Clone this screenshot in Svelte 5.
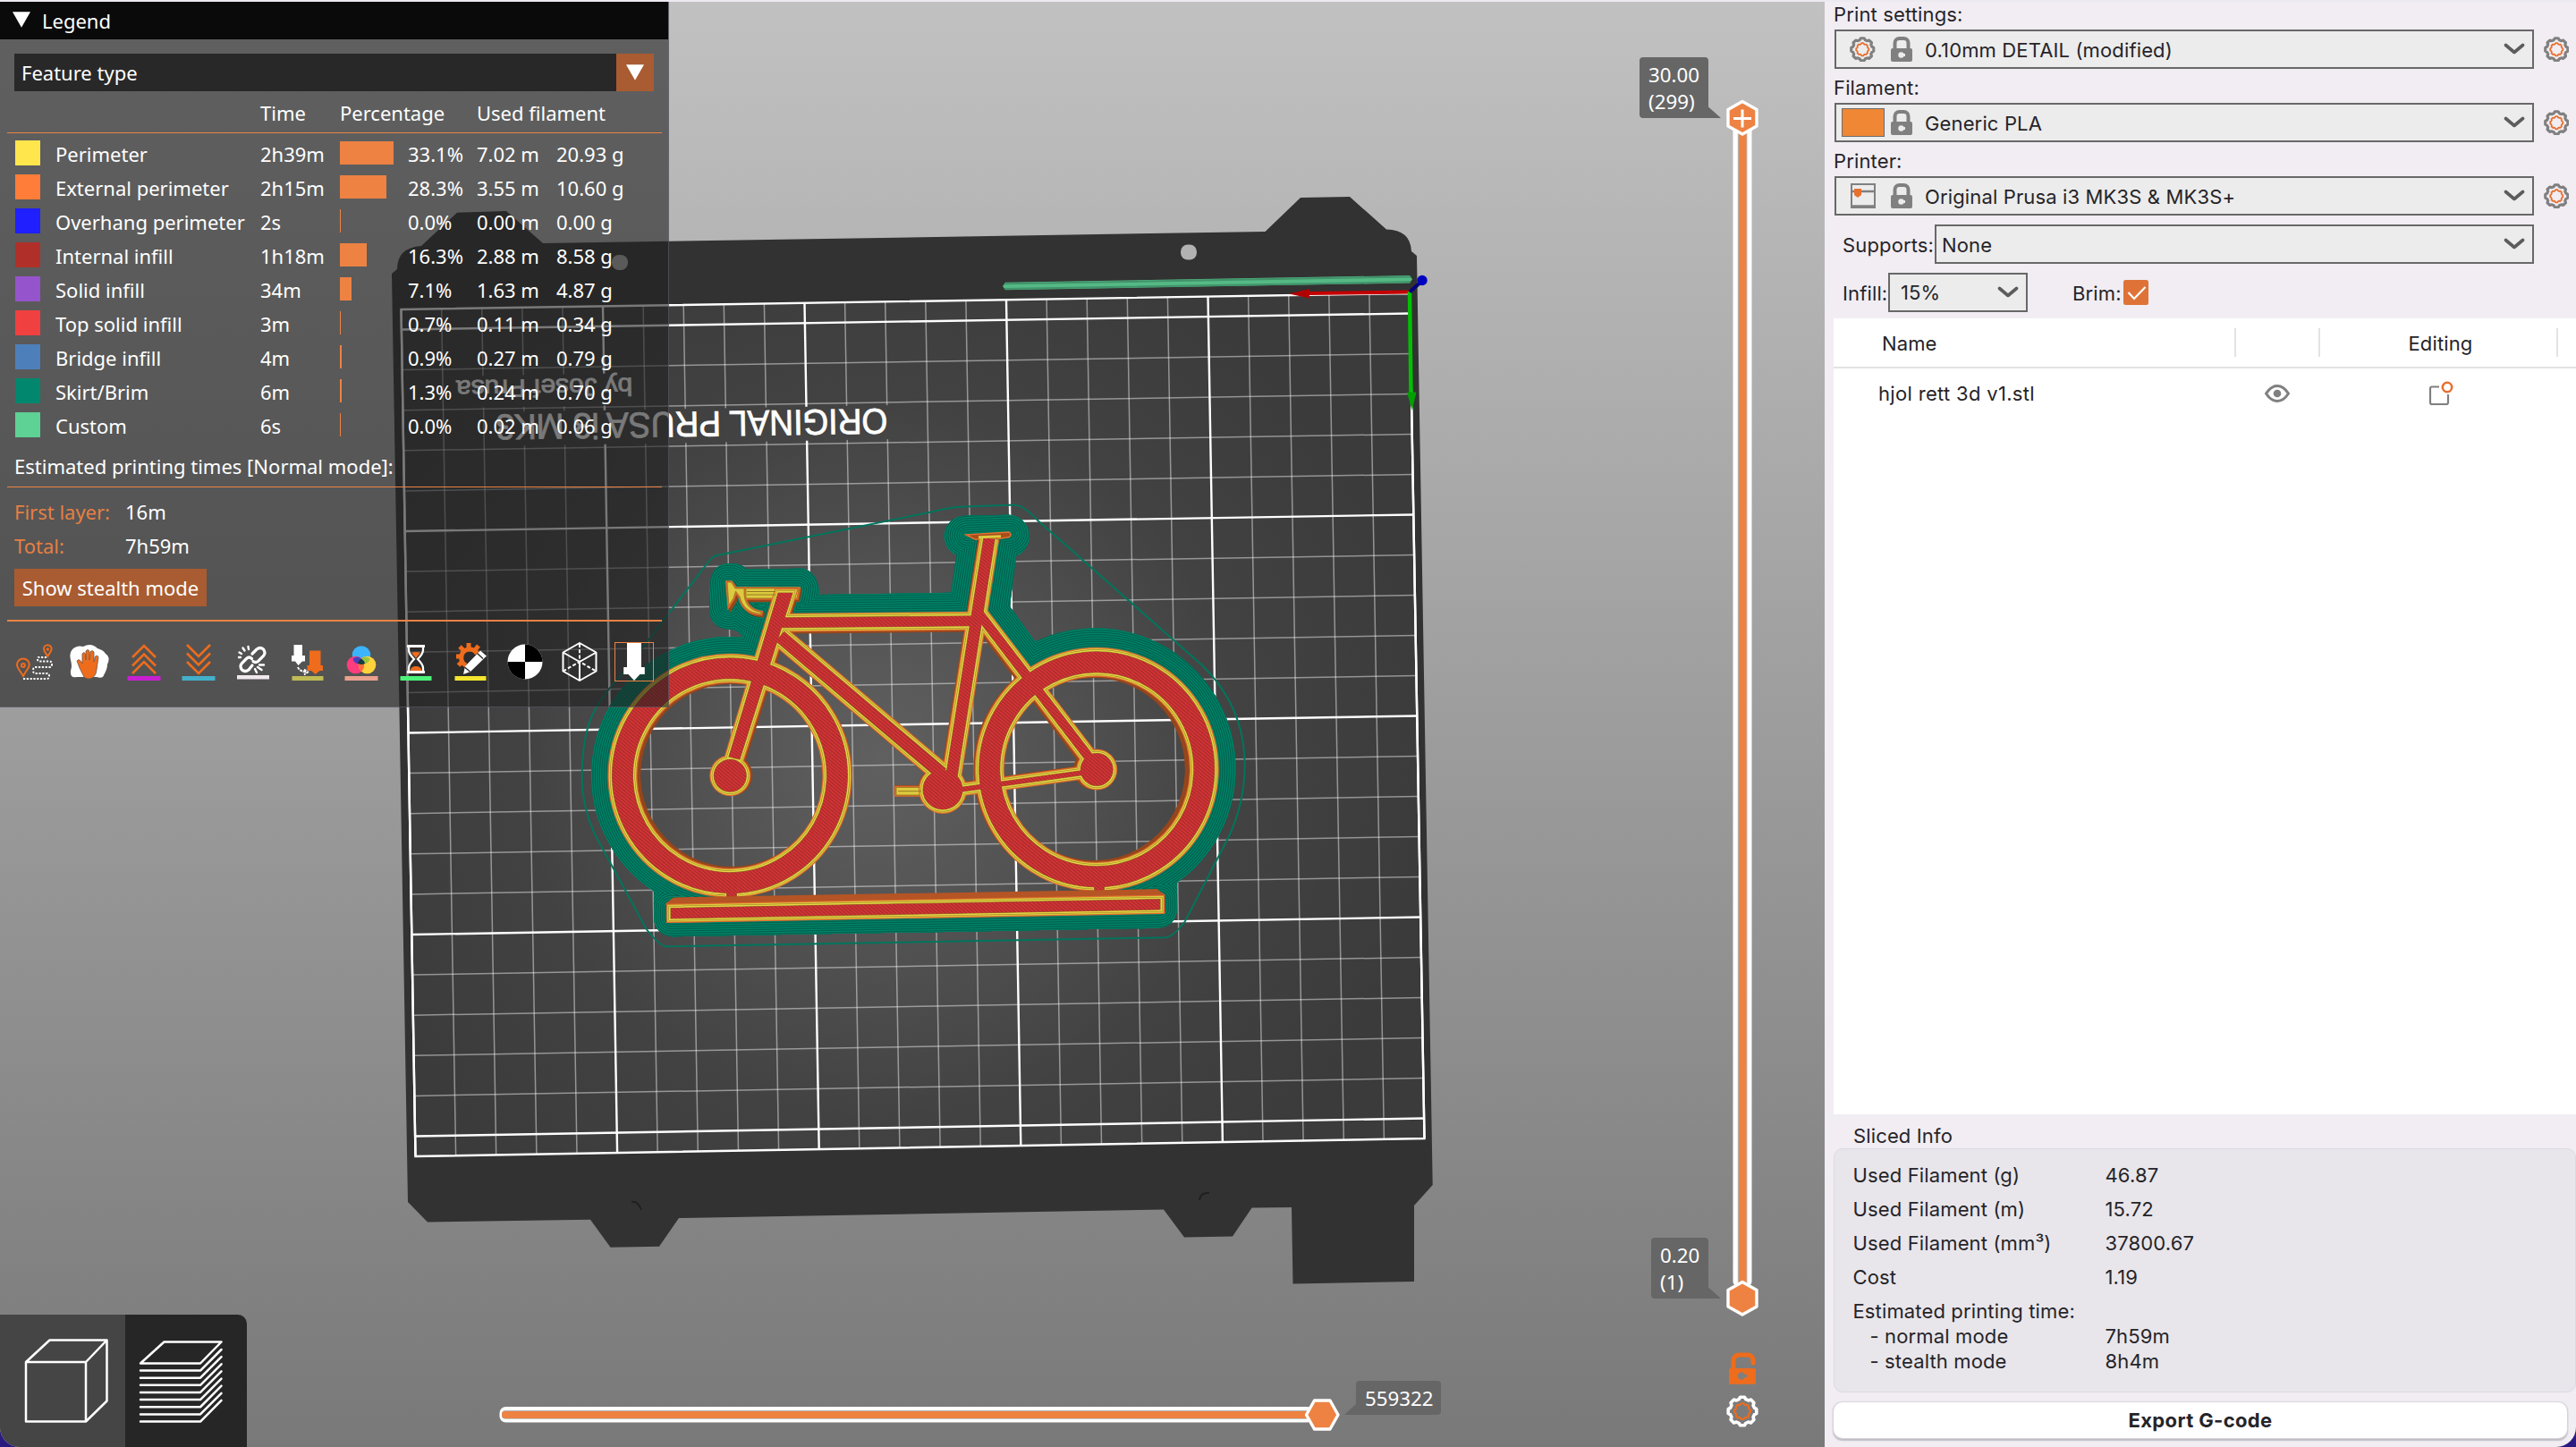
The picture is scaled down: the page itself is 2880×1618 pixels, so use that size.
<script>
  const features = [
    { name: 'Perimeter', color: '#ffe64d', time: '2h39m', bar: 60, pct: '33.1%', m: '7.02 m', g: '20.93 g' },
    { name: 'External perimeter', color: '#ff7d38', time: '2h15m', bar: 51.5, pct: '28.3%', m: '3.55 m', g: '10.60 g' },
    { name: 'Overhang perimeter', color: '#1f1fff', time: '2s', bar: 1, pct: '0.0%', m: '0.00 m', g: '0.00 g' },
    { name: 'Internal infill', color: '#b03029', time: '1h18m', bar: 30, pct: '16.3%', m: '2.88 m', g: '8.58 g' },
    { name: 'Solid infill', color: '#9654cc', time: '34m', bar: 13, pct: '7.1%', m: '1.63 m', g: '4.87 g' },
    { name: 'Top solid infill', color: '#f04040', time: '3m', bar: 1.4, pct: '0.7%', m: '0.11 m', g: '0.34 g' },
    { name: 'Bridge infill', color: '#4d80ba', time: '4m', bar: 1.8, pct: '0.9%', m: '0.27 m', g: '0.79 g' },
    { name: 'Skirt/Brim', color: '#00876e', time: '6m', bar: 2.4, pct: '1.3%', m: '0.24 m', g: '0.70 g' },
    { name: 'Custom', color: '#5ed194', time: '6s', bar: 1, pct: '0.0%', m: '0.02 m', g: '0.06 g' }
  ];

  const presets = [
    { label: 'Print settings:', icon: 'gear', value: '0.10mm DETAIL (modified)' },
    { label: 'Filament:', icon: 'swatch', value: 'Generic PLA' },
    { label: 'Printer:', icon: 'printer', value: 'Original Prusa i3 MK3S & MK3S+' }
  ];

  const info = [
    ['Used Filament (g)', '46.87'],
    ['Used Filament (m)', '15.72'],
    ['Used Filament (mm³)', '37800.67'],
    ['Cost', '1.19']
  ];

  // Corners of the printable area, and a bilinear lookup between them
  const TL = [448.5, 346], TR = [1576, 328], BL = [464.5, 1293], BR = [1592.5, 1273];
  function at(u, v) {
    return [0, 1].map((i) =>
      ((1 - v) * ((1 - u) * TL[i] + u * TR[i]) + v * ((1 - u) * BL[i] + u * BR[i])).toFixed(1)
    );
  }
  const columns = Array.from({ length: 26 }, (_, i) => ({ a: at(i / 25, 0), b: at(i / 25, 1), major: i % 5 === 0 }));
  const rows = Array.from({ length: 21 }, (_, i) => {
    const v = (5 + i * 10) / 210;
    return { a: at(0, v), b: at(1, v), major: i % 5 === 0 };
  });

  // Solid body of the model: stroked centre lines and filled outlines
  const body = [
    { d: 'M816 747.2a120 120 0 1 1-.1 0z', w: 23 },
    { d: 'M1226.3 740.3a120 120 0 1 1-.1 0z', w: 23 },
    { d: 'M816.3 867.3h.01', w: 36 },
    { d: 'M1226.2 860.5h.01', w: 36 },
    { d: 'M1054 883h.01', w: 44 },
    { d: 'M870 663L886 663L827 849L815 846Z', w: 0, fill: true },
    { d: 'M874 696.3L1092 694.2', w: 11 },
    { d: 'M872 711.5L1053 865', w: 14 },
    { d: 'M1106 602L1062 880', w: 12.5 },
    { d: 'M1093 684L1226 858', w: 10 },
    { d: 'M1062 884.5L1222 862.5', w: 5 },
    { d: 'M818 985V1012', w: 11 },
    { d: 'M1229 978V1006', w: 11 }
  ];
  // Thin features made of perimeters alone
  const thin = [
    'M834 658H893L891 669H834Z',
    'M813 651h4.500l4.500 7h10v7c1 11 7 18 19 19.500l-.5 2c-13-1-21-8-23.500-19.500l-4.500-6-2.500 8-5 8z',
    'M1002 880.500H1032V889H1002Z'
  ];
  const layers = [
    { c: '#db6a2b', x: 10 },
    { c: '#dccb40', x: 7.6 },
    { c: '#94781f', x: 5 },
    { c: '#e6d646', x: 4 },
    { c: '#8f6b22', x: 1.1 },
    { c: 'url(#infill)', x: 0 }
  ];
  const brimLayers = Array.from({ length: 22 }, (_, i) => ({ c: i % 2 ? '#00624e' : '#00856a', x: 62 - i * 2.5 }));
  const brimPath =
    'M731 996.600A155 155 0 0 1 661 867A155 155 0 0 1 831.500 712.800C826 705 822 704 815 703.700Q794 702 793.300 682V655Q795 631 815 630Q828 629 835 636.700L897 635.700Q915 639 915.700 665L1063.300 662.700L1069.300 620.700A23 23 0 0 1 1078 576.700L1128 575.700A23.900 23.900 0 0 1 1136 621.700L1129 678.300L1157.300 717.500A157 157 0 0 1 1381.300 866A155 155 0 0 1 1316 986.700V1016.700Q1314 1036 1295 1037.700L751.700 1047.300Q733 1045 731 1026.700Z' +
    'M818 1015V987A120 120 0 0 1 696 867A120 120 0 0 1 850 752L866 696L1088 694L1150 765A120 120 0 0 1 1346.300 860A120 120 0 0 1 1229 980V1008Z';
  const skirtPath =
    'M801.700 621L1040 572.700Q1058 568 1073 566.700L1128 564.700Q1138 564 1144 568Q1151 572 1160 581.700L1343 743Q1392 790 1391.700 857Q1391 900 1373 937L1325 1030Q1312 1047 1304 1048.300L744 1058.300Q736 1056 722.700 1039L665 933Q650 900 650.700 867Q651 825 662 800Q673 777 693 757L793 627Q797 622 801.700 621Z';
  const platePath =
    'M438 306L444 301Q444 277 471 275L511 237.700L566 236L607 272L1414.500 259L1454 221L1509 220L1550 256.500Q1577 257 1578 281L1584 286L1601.700 1325L1581 1348V1433L1445.500 1435.500L1444 1350L1399.600 1350.500L1378 1382.500L1324 1383.500L1301 1352.500L759 1362L737 1393.700L682.500 1394.700L660 1363.700L478 1366.500L456 1344Z';

  // Cog outline with n rounded teeth
  function cog(c, r1, r2, n) {
    let d = '';
    for (let i = 0; i < n; i++) {
      const a = (i * 2 * Math.PI) / n - Math.PI / 2, s = Math.PI / n;
      [[r2, -0.38], [r2, 0.38], [r1, 0.72], [r1, 1.28]].forEach(([r, k], j) => {
        d += (i || j ? 'L' : 'M') + (c + r * Math.cos(a + s * k)).toFixed(1) + ' ' + (c + r * Math.sin(a + s * k)).toFixed(1);
      });
    }
    return d + 'Z';
  }
  const cogOuter = cog(18, 13.800, 16, 8);
  const cogInner = cog(18, 7.800, 9, 8);
</script>

{#snippet gear(tone)}
  <svg class="gear" viewBox="0 0 36 36">
    <path d={cogOuter} fill="none" stroke={tone} stroke-width="4" stroke-linejoin="round" />
    <path d={cogInner} fill="none" stroke="#e8702f" stroke-width="2.300" stroke-linejoin="round" />
  </svg>
{/snippet}

{#snippet lock()}
  <svg class="lock" viewBox="0 0 24 28">
    <path d="M4.500 14V7a5 5 0 0 1 5-5h5a5 5 0 0 1 5 5v7" fill="none" stroke="#808080" stroke-width="4" />
    <rect x="0" y="13" width="24" height="15" rx="2" fill="#808080" />
    <circle cx="11.500" cy="20.500" r="3.200" fill="#ececec" /><path d="M12 19h4v3h-4z" fill="#ececec" />
  </svg>
{/snippet}

{#snippet chevron()}
  <svg class="chev" viewBox="0 0 24 14"><path d="M2.500 2.500L12 10.500L21.500 2.500" fill="none" stroke="#5c5c5c" stroke-width="3.600" stroke-linecap="round" stroke-linejoin="round" /></svg>
{/snippet}

<div class="app">
  <main class="viewport">
    <svg class="scene" viewBox="0 0 2040 1618">
      <defs>
        <radialGradient id="bed" gradientUnits="userSpaceOnUse" cx="985" cy="850" r="620">
          <stop offset="0" stop-color="#606060" /><stop offset=".3" stop-color="#535353" /><stop offset=".65" stop-color="#424242" /><stop offset="1" stop-color="#3b3b3b" />
        </radialGradient>
        <pattern id="infill" width="3" height="3" patternUnits="userSpaceOnUse" patternTransform="rotate(40)">
          <rect width="3" height="3" fill="#da3535" /><rect width="3" height="1.300" fill="#a32a2c" />
        </pattern>
        <mask id="labels" maskUnits="userSpaceOnUse" x="0" y="0" width="2040" height="1618">
          <rect width="2040" height="1618" fill="#fff" />
          <path d="M500 421L712 417V453L500 456ZM548 461L1000 453V491L548 499Z" fill="#000" />
        </mask>
        <clipPath id="brim"><path d={brimPath} clip-rule="evenodd" /></clipPath>
      </defs>

      <path d={platePath} fill="#323232" />
      <rect x="1320" y="273.500" width="18" height="17" rx="8" fill="#b2b2b2" />
      <rect x="684" y="285" width="18" height="17" rx="8" fill="#b2b2b2" />
      <path d="M706 1344q7-2 11 9M1341 1342q1-9 11-8" fill="none" stroke="#202020" stroke-width="2" />

      <path d="M448.500 346L1576 328L1592.500 1273L464.500 1293Z" fill="url(#bed)" />
      <g mask="url(#labels)">
        {#each columns as l}
          <path class={l.major ? 'major' : 'minor'} d="M{l.a}L{l.b}" />
        {/each}
      </g>
      {#each rows as l}
        <path class={l.major ? 'major' : 'minor'} d="M{l.a}L{l.b}" />
      {/each}
      <path class="major" d="M448.500 346L1576 328L1592.500 1273L464.500 1293Z" />

      <g class="bedtext">
        <text transform="translate(992 457) rotate(179.100)" textLength="438" lengthAdjust="spacingAndGlyphs" font-size="40">ORIGINAL PRUSA i3 MK3</text>
        <text transform="translate(707 422.500) rotate(179.100)" textLength="197" lengthAdjust="spacingAndGlyphs" font-size="28">by Josef Prusa</text>
      </g>

      <path d={skirtPath} fill="none" stroke="#00755c" stroke-width="2" />

      <g clip-path="url(#brim)">
        <path d={brimPath} fill="#007159" fill-rule="evenodd" />
        {#each brimLayers as l}
          {#each body as p}
            <path d={p.d} fill={p.fill ? l.c : 'none'} stroke={l.c} stroke-width={p.w + l.x} stroke-linecap={p.w > 30 ? 'round' : 'butt'} stroke-linejoin="round" />
          {/each}
          {#each thin as d}
            <path {d} fill={l.c} stroke={l.c} stroke-width={Math.max(l.x - 6, 0)} stroke-linejoin="round" />
          {/each}
          <path d="M750 1015.500L1297 1005.500V1017L750 1027Z" fill={l.c} stroke={l.c} stroke-width={l.x} stroke-linejoin="round" />
          <path d="M1081 598.500L1129 596.500" stroke={l.c} stroke-width={Math.max(l.x - 6, 0)} stroke-linecap="round" />
        {/each}
      </g>

      <g transform="translate(980 840) scale(.986) translate(-980 -840)">
        {#each body as p}
          <path d={p.d} fill={p.fill ? '#96451c' : 'none'} stroke="#96451c" stroke-width={p.w + 10} stroke-linecap={p.w > 30 ? 'round' : 'butt'} />
        {/each}
        {#each thin as d}
          <path {d} fill="#96451c" stroke="#96451c" stroke-width="4" />
        {/each}
      </g>
      <path d="M1080 598L1128 595q4 3 0 5.500L1114 603H1090Z" fill="#a84c1c" stroke="#e0702f" stroke-width="1.500" />
      {#each thin as d}
        <path {d} fill="#dccb40" stroke="#db6a2b" stroke-width="3.600" />
        <path {d} fill="#dccb40" stroke="#94781f" stroke-width=".8" />
      {/each}
      {#each layers as l}
        {#each body as p}
          <path d={p.d} fill={p.fill ? l.c : 'none'} stroke={l.c} stroke-width={p.w + l.x} stroke-linecap={p.w > 30 ? 'round' : 'butt'} />
        {/each}
      {/each}
      <path d="M1004 884.700H1030" stroke="#94781f" stroke-width="1" />
      <path d="M1094 600.800L1119 599.800" stroke="#dccb40" stroke-width="3" />
      <path d="M835 661.500H867M835 665H867" stroke="#94781f" stroke-width="1" />

      <path d="M744.500 1010L753 1003.500L1293.500 994L1302.500 1000.500L1303 1021.500L745.500 1032Z" fill="#b55425" />
      <g stroke-linejoin="miter">
        {#each layers as l}
          <path d="M750 1015.500L1297 1005.500V1017L750 1027Z" fill={l.c} stroke={l.c} stroke-width={l.x} />
        {/each}
      </g>

      <path d="M1121 320l3-4.300L1576 308l3 4.200-3 4.300L1124 324.300Z" fill="#55b985" />
      <path d="M1123 323L1577 315.300M1123 317.200L1577 309.400" stroke="#41936a" stroke-width="2" />
      <path d="M1576 326.500L1463 328" stroke="#c40000" stroke-width="4" />
      <path d="M1441 328.500L1464 323V333.500Z" fill="#b00000" />
      <path d="M1576 326L1577.500 440" stroke="#00c000" stroke-width="4.500" />
      <path d="M1573 438.500H1583.500L1578.700 459Z" fill="#00a000" />
      <path d="M1576 326.500L1589 315" stroke="#00007c" stroke-width="4" />
      <circle cx="1590" cy="313.500" r="5.700" fill="#0000c0" />

      <!-- layer range slider -->
      <path d="M1837 64H1906a4 4 0 0 1 4 4V119.500L1924 132H1837a4 4 0 0 1-4-4V68a4 4 0 0 1 4-4Z" fill="#666" />
      <path d="M1850 1384H1906a4 4 0 0 1 4 4V1439.500L1924 1452H1850a4 4 0 0 1-4-4V1388a4 4 0 0 1 4-4Z" fill="#666" />
      <rect x="1937.500" y="130" width="21" height="1308" rx="5" fill="#fff" />
      <rect x="1942.800" y="130" width="10.600" height="1312" fill="#b4b4b4" />
      <rect x="1944" y="130" width="8.500" height="1312" fill="#ed8243" />
      <path class="thumb" d="M1948 113.500L1964 122.500V141L1948 150L1932 141V122.500Z" />
      <path d="M1938 132.500H1958M1948 122.500V142.500" stroke="#fff" stroke-width="3" />
      <path class="thumb" d="M1948 1433.500L1964 1442.500V1461L1948 1470L1932 1461V1442.500Z" />
      <g class="tip">
        <text x="1843" y="92">30.00</text><text x="1843" y="122">(299)</text>
        <text x="1856" y="1412">0.20</text><text x="1856" y="1442">(1)</text>
      </g>

      <!-- move slider -->
      <path d="M1520 1544H1607a4 4 0 0 1 4 4V1578a4 4 0 0 1-4 4H1503L1516 1570V1548a4 4 0 0 1 4-4Z" fill="#666" />
      <rect x="558.500" y="1573" width="910" height="17.500" rx="7" fill="#fff" />
      <rect x="561" y="1577" width="905" height="9.700" rx="4" fill="#b4b4b4" />
      <rect x="561" y="1578" width="905" height="8" rx="4" fill="#ed8243" />
      <path class="thumb" d="M1460.500 1582L1469.500 1566H1487L1496 1582L1487 1598H1469.500Z" />
      <g class="tip"><text x="1526" y="1572">559322</text></g>

      <path d="M1938 1530V1522q0-7 7-7h8q7 0 7 7v2" fill="none" stroke="#ee6c1c" stroke-width="5" stroke-linecap="round" />
      <rect x="1933" y="1530" width="30" height="17.700" rx="1.500" fill="#ee6c1c" />
      <circle cx="1947" cy="1538.500" r="4" fill="#7f7f7f" /><rect x="1947" y="1537" width="6" height="3" fill="#7f7f7f" />
      <g transform="translate(1930 1560)">
        <path d={cogOuter} fill="none" stroke="#fff" stroke-width="3.600" stroke-linejoin="round" />
        <path d={cogInner} fill="none" stroke="#ee6c1c" stroke-width="2" stroke-linejoin="round" />
      </g>
    </svg>

    <section class="legend">
      <header><i class="tri"></i>Legend</header>
      <div class="select"><span>Feature type</span><b><i class="tri"></i></b></div>
      <div class="row head"><span></span><span></span><span>Time</span><span class="wide">Percentage</span><span class="wide">Used filament</span></div>
      <hr />
      <div class="rows">
        {#each features as f}
          <div class="row">
            <i class="sw" style:background={f.color}></i>
            <span>{f.name}</span><span>{f.time}</span>
            <i class="bar" style:width="{f.bar}px"></i>
            <span>{f.pct}</span><span>{f.m}</span><span>{f.g}</span>
          </div>
        {/each}
      </div>
      <div class="est">Estimated printing times [Normal mode]:</div>
      <hr />
      <dl>
        <dt>First layer:</dt><dd>16m</dd>
        <dt>Total:</dt><dd>7h59m</dd>
      </dl>
      <button class="stealth">Show stealth mode</button>
      <hr />
      <div class="tools">
        <svg viewBox="0 0 44 44"><g fill="none" stroke="#ee6c1c" stroke-width="2"><path d="M8.900 38C5 31 2 29 2 25a6.900 6.500 0 0 1 13.800 0C15.800 29 12.500 31 8.900 38Z" /><circle cx="8.900" cy="26" r="2" /><path d="M36.300 16C34 12 32 10 32 7.500a4.300 4.300 0 0 1 8.600 0C40.600 10 38.500 12 36.300 16Z" /><circle cx="36.300" cy="8" r=".8" /></g><path d="M9 41H35q3 0 3-3t-3-3H23q-3 0-3-3.500t3-3.500H38q3 0 3-3.300t-3-3.200H27q-2 0-2-2.500t2-2h8" fill="none" stroke="#fff" stroke-width="2" stroke-dasharray="2.200 1.600" /></svg>
        <svg viewBox="0 0 44 44"><path d="M3 8Q8 3 15 5Q24 0 31 7Q38 9 40 13Q46 17 42 25Q42 30 38 37Q37 41 30 39H8Q0 41 1 32Q3 27 1 20Q-1 12 3 8Z" fill="#fff" /><path d="M11 29L8 21q2-3 5 1l1 2V13q2-3 3.500 0l.5 7V10q2-3 4 0v10l1-9q2-3 4 0v11l1.500-6q3-2 3.500 1l-2 14q-1 9-8 10q-6 0-7-4Z" fill="#ee6c1c" stroke="#6b5a50" stroke-width=".8" /></svg>
        <svg viewBox="0 0 44 44"><path d="M9 17L22 4L35 17M9 26.500L22 13.500L35 26.500M9 35L22 22L35 35" fill="none" stroke="#ee6c1c" stroke-width="2.600" /><rect x="3.500" y="38" width="37" height="5" fill="#c81ed2" /></svg>
        <svg viewBox="0 0 44 44"><path d="M9 3L22 16L35 3M9 12.500L22 25.500L35 12.500M9 22L22 35L35 22" fill="none" stroke="#ee6c1c" stroke-width="2.600" /><rect x="3.500" y="38" width="37" height="5" fill="#43b0cb" /></svg>
        <svg viewBox="0 0 44 44"><g fill="none" stroke="#fff" stroke-width="3.200" stroke-linecap="round"><path d="M21 13l5-5q4-3 7.500 0q3 4 0 7.500l-6 6q-3 2-5.500 0M21 26l-4 5q-4 3-7.500 0q-3-4 0-7.500l5-5q3-3 6 0" /><path d="M9 13l-2.500-1.500M12.500 9.500l-2-3M17 8l-.5-3M8 17h-2M29 25.500l5 0M27 28l4.500 3M24 30l2 4" stroke-width="2.400" /></g><rect x="4" y="37" width="36" height="4.500" fill="#f0e8ee" /></svg>
        <svg viewBox="0 0 44 44"><path d="M6.500 3H16V15h3v6.500h-3L11.500 26L8 21.500H4V15h2.500Z" fill="#fff" /><path d="M24 9.500H36.500V26h2.500v6h-3.500L30.500 36L26 32H21.500V26H24Z" fill="#ee6c1c" /><path d="M11 28q2 5 10 5.500m-3-3l4 3-4 3" fill="none" stroke="#fff" stroke-width="2" stroke-dasharray="3 1" /><rect x="4.500" y="38" width="35" height="5" fill="#c0bb55" /></svg>
        <svg viewBox="0 0 44 44"><circle cx="22" cy="14.500" r="10.300" fill="#3bb4fb" /><circle cx="15.500" cy="25.500" r="9.800" fill="#ff3d7d" /><circle cx="28.500" cy="25.500" r="9.800" fill="#ffd23d" /><path d="M22 18.500a10 10 0 0 1 0 14.500a10 10 0 0 1 0-14.500Z" fill="#ff6d3a" /><path d="M12.500 18.500q5-4 9.500 0q-4 3-4 6q-5-2-5.500-6Z" fill="#4a3fc0" /><path d="M31.500 18.500q-5-4-9.500 0q4 3 4 6q5-2 5.500-6Z" fill="#9bc440" /><path d="M22 18.500q4 3 4 5.500q-4 2-8 0q0-3 4-5.500Z" fill="#123c40" /><rect x="3.500" y="38" width="37" height="5" fill="#e9a08c" /></svg>
        <svg viewBox="0 0 44 44"><path d="M12 4.500H32M12 33.500H32" stroke="#fff" stroke-width="3" /><path d="M14 5v4q0 4 6 10q-6 6-6 10v4M30 5v4q0 4-6 10q6 6 6 10v4" fill="none" stroke="#fff" stroke-width="2.300" /><path d="M17 12q5-2 10 0l-5 6ZM15.500 32q1-5 6.500-5t6.500 5Z" fill="#ee6c1c" /><rect x="4.500" y="38" width="35" height="5" fill="#4df27a" /></svg>
        <svg viewBox="0 0 44 44"><path d="M17 26A9.500 9.500 0 1 1 29.500 13" fill="none" stroke="#ee6c1c" stroke-width="5" /><path d="M20 1v6M10 5l4 4M6 16h5M8.500 26l4-4M31 4l-4 5M34 14h-5" stroke="#ee6c1c" stroke-width="5" /><path d="M14 36l2-9L33 9.500l7 6L22 33Z" fill="#fff" /><path d="M29.500 12.500l6.500 6M15.500 28l6 5" stroke="#2f2f2f" stroke-width="1.500" /><rect x="4.500" y="38" width="35" height="5" fill="#f3e52f" /></svg>
        <svg viewBox="0 0 44 44"><circle cx="22" cy="22" r="19.500" fill="#fff" /><path d="M22 22V2.500A19.500 19.500 0 0 1 41.500 22ZM22 22V41.500A19.500 19.500 0 0 1 2.500 22Z" fill="#000" transform="rotate(0 22 22)" /></svg>
        <svg viewBox="0 0 44 44"><path d="M22 1L40.500 11.500V32.500L22 43L3.500 32.500V11.500ZM22 43V22M3.500 11.500L22 22L40.500 11.500" fill="none" stroke="#fff" stroke-width="2" stroke-linejoin="round" /><path d="M22 2V22M3.500 32.500L22 22L40.500 32.500" fill="none" stroke="#fff" stroke-width="2" stroke-dasharray="4 2.200" /></svg>
        <svg viewBox="0 0 44 44" class="on"><path d="M14 1H30V28H33.800V36H28.500L22 43L15.500 36H10.200V28H14Z" fill="#fff" /></svg>
      </div>
    </section>

    <nav class="views">
      <div class="view"><svg viewBox="0 0 140 148"><path d="M29 53H96V119.500H29ZM29 53L55.500 28.500H119.500L96 53M119.500 28.500V96.500L96 119.500" fill="none" stroke="#fff" stroke-width="2.500" stroke-linejoin="round" /></svg></div>
      <div class="view active">
        <svg viewBox="140 0 136 148"><g fill="none" stroke="#fff" stroke-width="2.500" stroke-linejoin="round" stroke-linecap="round"><path d="M157 54.500L183.500 30.500H247.500L224 54.500Z" />
          {#each Array(8) as _, i}<path d="M157 {62.6 + i * 8.13}H224L247.500 {39 + i * 8.13}" />{/each}
        </g></svg>
      </div>
    </nav>
  </main>

  <aside>
    {#each presets as p}
      <div class="plabel">{p.label}</div>
      <div class="preset">
        <div class="combo">
          <span class="pic">
            {#if p.icon === 'gear'}{@render gear('#808080')}
            {:else if p.icon === 'swatch'}<i class="swatch"></i>
            {:else}<svg class="printer" viewBox="0 0 28 28"><path d="M1 1H27V27H1Z" fill="none" stroke="#808080" stroke-width="2" /><path d="M1 9H27M1 25.500H27" stroke="#808080" stroke-width="2.500" /><path d="M4 6H12V13L8 16L4 13Z" fill="#e8702f" /></svg>{/if}
          </span>
          {@render lock()}
          <span class="val">{p.value}</span>
          {@render chevron()}
        </div>
        {@render gear('#808080')}
      </div>
    {/each}
    <div class="line supports"><span class="cap">Supports:</span><div class="combo"><span class="low">None</span>{@render chevron()}</div></div>
    <div class="line infill">
      <span class="cap">Infill:</span><div class="combo">15%{@render chevron()}</div>
      <span class="cap brimlabel">Brim:</span>
      <svg class="check" viewBox="0 0 28 28"><rect width="28" height="28" rx="2.500" fill="#df7337" /><path d="M5.500 14L12 21L24.500 8" fill="none" stroke="#fff" stroke-width="2.200" /></svg>
    </div>

    <div class="objects">
      <div class="orow ohead"><span>Name</span><span></span><span class="mid">Editing</span><span></span></div>
      <div class="orow item">
        <span>hjol rett 3d v1.stl</span>
        <svg viewBox="0 0 28 20"><path d="M1.500 10Q7 1.500 14 1.500T26.500 10Q21 18.500 14 18.500T1.500 10Z" fill="none" stroke="#808080" stroke-width="3" /><circle cx="14" cy="10" r="4.300" fill="#808080" /></svg>
        <svg class="edit" viewBox="0 0 28 28"><path d="M12 6.500H4Q2 6.500 2 8.500V24Q2 26 4 26H20Q22 26 22 24V15" fill="none" stroke="#808080" stroke-width="2.200" /><circle cx="21" cy="7" r="5.200" fill="none" stroke="#e8702f" stroke-width="2.600" /></svg>
      </div>
    </div>

    <h3>Sliced Info</h3>
    <div class="info">
      {#each info as [k, v]}
        <div><span>{k}</span><span>{v}</span></div>
      {/each}
      <div><span>Estimated printing time:</span></div>
      <div class="sub"><span>- normal mode</span><span>7h59m</span></div>
      <div class="sub"><span>- stealth mode</span><span>8h4m</span></div>
    </div>
    <button class="export">Export G-code</button>
  </aside>
</div>

<style>
  :global(body) { background: #2b1a80; overflow: hidden; }
  .app { display: flex; width: 2880px; height: 1618px; box-sizing: border-box; border-top: 2px solid #ede9f0; border-radius: 0 0 22px 22px; overflow: hidden; background: #f1edf3; }
  i { display: block; }
  .viewport { position: relative; width: 2040px; height: 1616px; flex: none; background: linear-gradient(#c1c1c1, #797979); }
  .scene { position: absolute; left: 0; top: -2px; width: 2040px; height: 1618px; }
  .major { fill: none; stroke: #fff; stroke-width: 2.4; }
  .minor { fill: none; stroke: #fff; stroke-opacity: .45; stroke-width: 1.5; }
  .bedtext { fill: #fff; font-family: "Liberation Sans", Arial, sans-serif; }
  .bedtext text { stroke: #fff; stroke-width: .8; }
  .thumb { fill: #ed8243; stroke: #fff; stroke-width: 3.4; stroke-linejoin: round; }
  .tip { fill: #fff; font: 22.3px "Noto Sans", sans-serif; }

  .legend { position: absolute; left: 0; top: 0; width: 748px; height: 789px; box-sizing: border-box; border: 1px solid rgba(110, 110, 128, .5); border-width: 0 1px 1px 0; background: rgba(31, 31, 31, .6); color: #fff; font: 22px/38px "Noto Sans", sans-serif; }
  .legend header { height: 42px; line-height: 41px; box-sizing: border-box; padding-left: 14px; display: flex; align-items: center; gap: 13px; background: #0a0a0a; }
  .tri { width: 20px; height: 17.500px; background: #fff; clip-path: polygon(0 0, 100% 0, 50% 100%); }
  header .tri { margin-top: -2px; }
  .select { display: flex; justify-content: space-between; margin: 16px 16px 0; height: 42px; line-height: 43px; background: #282828; }
  .select span { padding-left: 8px; }
  .select b { width: 42px; display: grid; place-items: center; background: #a95c31; }
  .row { display: grid; grid-template-columns: 45px 229px 89px 76px 77px 89px 1fr; height: 38px; align-items: center; padding-left: 17px; white-space: nowrap; }
  .row span { line-height: 36px; padding-top: 2px; }
  .head { height: 46px; }
  .wide:nth-child(4) { grid-column: 4 / span 2; }
  hr { border: 0; margin: 0 7px 0 8px; height: 1.400px; background: #ed8243; }
  .rows { padding-top: 2.600px; }
  .sw { width: 28px; height: 28px; }
  .bar { height: 26px; background: #ed8243; }
  .est { padding: 0 16px; height: 44px; line-height: 43px; margin-top: 6px; white-space: nowrap; }
  dl { display: grid; grid-template-columns: 124px 1fr; margin: 8px 0 7px; padding-left: 16px; }
  dt { color: #e67f43; }
  dd { margin: 0; }
  .stealth { display: block; margin: 0 0 15px 16px; padding: 0; width: 215px; height: 42px; border: 0; background: #a95c31; color: #fff; font: 22px/43px "Noto Sans", sans-serif; }
  .tools { display: flex; justify-content: space-between; margin: 23px 16px 0 17px; }
  .tools svg { width: 44px; height: 44px; }
  .tools .on { outline: 1.500px solid #ed8243; outline-offset: -1px; }

  .views { position: absolute; left: 0; bottom: 0; display: flex; }
  .view { width: 140px; height: 148px; background: #454545; }
  .view.active { width: 136px; background: #262626; border-radius: 0 10px 0 0; }
  .view svg { display: block; width: 100%; height: 100%; }

  aside { width: 840px; box-sizing: border-box; padding-left: 10px; display: flex; flex-direction: column; color: #262428; font: 22px/26px Inter, sans-serif; letter-spacing: .14px; }
  .plabel { height: 31px; line-height: 28px; }
  .preset { display: flex; align-items: center; gap: 11px; margin: 0 0 7px 1px; }
  .combo { display: flex; align-items: center; height: 44px; box-sizing: border-box; border: 2px solid #686868; background: #ececec; flex: none; }
  .preset .combo { width: 781.500px; }
  .pic { width: 49px; margin: 0 7px 0 5px; display: grid; place-items: center; }
  .gear { width: 28.500px; height: 28.500px; }
  .lock { width: 24px; height: 28px; }
  .printer { width: 28px; height: 28px; }
  .swatch { width: 46px; height: 30px; border: 1px solid #6c6c6c; background: #ef8735; }
  .val { margin-left: 14px; padding-top: 2px; }
  .low { padding-top: 2px; }
  .chev { width: 24px; height: 14px; margin-left: auto; margin-right: 8px; }
  .line { display: flex; align-items: center; padding-left: 10px; height: 44px; }
  .cap { padding-top: 1.500px; }
  .supports { margin-top: 3px; }
  .supports .cap { width: 103px; }
  .supports .combo { width: 670px; padding-left: 6px; }
  .infill { margin-top: 10px; }
  .infill .cap { width: 51px; }
  .infill .combo { width: 156px; padding-left: 12px; }
  .infill .brimlabel { width: 57px; margin-left: 50px; }
  .check { width: 28px; height: 28px; }
  .objects { height: 890px; margin-top: 7px; background: #fff; }
  .orow { display: grid; grid-template-columns: 449px 94px 266px 1fr; align-items: center; }
  .ohead { height: 54px; border-bottom: 2px solid #e3e3e3; }
  .ohead span { line-height: 34px; height: 32px; border-left: 2px solid #e3e3e3; margin-left: -1px; }
  .ohead span:first-child { border: 0; margin: 0; padding-left: 54px; }
  .ohead .mid { text-align: center; padding-left: 4px; }
  .item { height: 56px; justify-items: center; }
  .item span { justify-self: start; padding-left: 50px; letter-spacing: .32px; }
  .item svg { width: 28px; }
  .item .edit { margin-left: 6px; }
  h3 { font: inherit; margin: 0; padding-left: 22px; height: 38px; line-height: 49px; }
  .info { height: 273px; box-sizing: border-box; border: 1.500px solid #dcd9e0; border-radius: 10px; background: #e8e6eb; padding: 10px 0 0 20.500px; }
  .info div { display: grid; grid-template-columns: 282px 1fr; height: 38px; line-height: 38px; }
  .info div:nth-child(n + 6) { height: 28px; line-height: 19px; }
  .info .sub span:first-child { padding-left: 19px; }
  .export { margin: 11px 10px 0 0; height: 40px; border: 0; border-radius: 10px; background: #fff; box-shadow: 0 0 1px 1px #d9d6dc, 0 1.500px 1.500px 1px #bdbac0; color: #262428; font: 700 22px/40px Inter, sans-serif; letter-spacing: .35px; padding: 0; }
</style>
